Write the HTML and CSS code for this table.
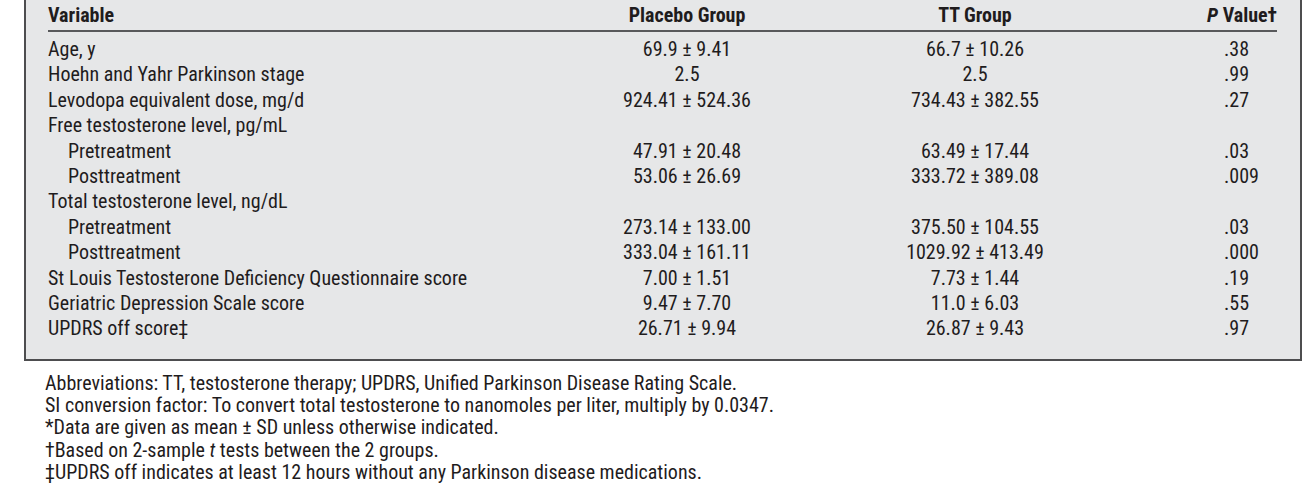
FILE: index.html
```html
<!DOCTYPE html>
<html>
<head>
<meta charset="utf-8">
<link rel="stylesheet" href="styles.css">
</head>
<body>
<div class="panel">
  <table class="data">
    <colgroup>
      <col class="c-var"><col class="c-pl"><col class="c-tt"><col class="c-p">
    </colgroup>
    <thead>
      <tr><th class="var">Variable</th><th class="grp">Placebo Group</th><th class="grp">TT Group</th><th class="pv"><i>P</i> Value†</th></tr>
    </thead>
    <tbody>
      <tr class="first"><td>Age, y</td><td class="num">69.9 ± 9.41</td><td class="num">66.7 ± 10.26</td><td class="p">.38</td></tr>
      <tr><td>Hoehn and Yahr Parkinson stage</td><td class="num">2.5</td><td class="num">2.5</td><td class="p">.99</td></tr>
      <tr><td>Levodopa equivalent dose, mg/d</td><td class="num">924.41 ± 524.36</td><td class="num">734.43 ± 382.55</td><td class="p">.27</td></tr>
      <tr><td>Free testosterone level, pg/mL</td><td></td><td></td><td></td></tr>
      <tr class="sub"><td>Pretreatment</td><td class="num">47.91 ± 20.48</td><td class="num">63.49 ± 17.44</td><td class="p">.03</td></tr>
      <tr class="sub"><td>Posttreatment</td><td class="num">53.06 ± 26.69</td><td class="num">333.72 ± 389.08</td><td class="p">.009</td></tr>
      <tr><td>Total testosterone level, ng/dL</td><td></td><td></td><td></td></tr>
      <tr class="sub"><td>Pretreatment</td><td class="num">273.14 ± 133.00</td><td class="num">375.50 ± 104.55</td><td class="p">.03</td></tr>
      <tr class="sub"><td>Posttreatment</td><td class="num">333.04 ± 161.11</td><td class="num">1029.92 ± 413.49</td><td class="p">.000</td></tr>
      <tr><td>St Louis Testosterone Deficiency Questionnaire score</td><td class="num">7.00 ± 1.51</td><td class="num">7.73 ± 1.44</td><td class="p">.19</td></tr>
      <tr><td>Geriatric Depression Scale score</td><td class="num">9.47 ± 7.70</td><td class="num">11.0 ± 6.03</td><td class="p">.55</td></tr>
      <tr><td>UPDRS off score‡</td><td class="num">26.71 ± 9.94</td><td class="num">26.87 ± 9.43</td><td class="p">.97</td></tr>
    </tbody>
  </table>
</div>
<div class="notes">
  <p>Abbreviations: TT, testosterone therapy; UPDRS, Unified Parkinson Disease Rating Scale.</p>
  <p>SI conversion factor: To convert total testosterone to nanomoles per liter, multiply by 0.0347.</p>
  <p>*Data are given as mean ± SD unless otherwise indicated.</p>
  <p>†Based on 2-sample <i>t</i> tests between the 2 groups.</p>
  <p>‡UPDRS off indicates at least 12 hours without any Parkinson disease medications.</p>
</div>
</body>
</html>
```

FILE: styles.css
```css
html, body {
  margin: 0;
  padding: 0;
  background: #ffffff;
}
body {
  font-family: "Roboto", "Liberation Sans", sans-serif;
  font-stretch: 75%;
  color: #1f1c1d;
}
.panel {
  margin-left: 24px;
  width: 1278px;
  box-sizing: border-box;
  background: #e6e7e8;
  border: 2px solid #4d4d4f;
  border-top: none;
  padding: 0 23px 17px 22px;
}
.data {
  width: 100%;
  border-collapse: collapse;
  table-layout: fixed;
  font-size: 20px;
}
.c-var { width: 492px; }
.c-pl { width: 294px; }
.c-tt { width: 282px; }
.c-p { width: 161px; }
.data th {
  height: 30px;
  padding: 0;
  font-weight: bold;
  border-bottom: 2px solid #58595b;
  vertical-align: middle;
  white-space: nowrap;
}
.data th.var { text-align: left; }
.data th.grp { text-align: center; }
.data th.pv { text-align: right; }
.data td {
  padding: 0;
  line-height: 25.4px;
  white-space: nowrap;
}
.data tr.first td { padding-top: 5px; }
.data tr.sub td:first-child { padding-left: 20px; }
.data td.num { text-align: center; }
.data td.p { padding-left: 108px; text-align: left; }
.notes {
  margin: 11px 0 0 45px;
  font-size: 20px;
  line-height: 22.3px;
}
.notes p { margin: 0; white-space: nowrap; }
```
